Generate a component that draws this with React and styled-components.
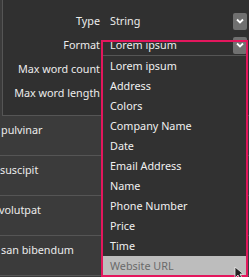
import React from "react";
import styled, { createGlobalStyle } from "styled-components";

const Global = createGlobalStyle`
  html, body { margin: 0; padding: 0; background: #2f2f2f; }
  body { font-family: "Noto Sans", "Open Sans", sans-serif; }
`;

const Frame = styled.div`
  position: relative;
  width: 249px;
  height: 277px;
  overflow: hidden;
  background: #3b3b3b;
  font-size: 10.8px;
  color: #ececec;
`;

const Props = styled.div`
  height: 116px;
  margin-left: 2px;
  border-left: 1px solid #555;
  border-bottom: 1px solid #555;
  background: #303030;
  box-sizing: border-box;
  padding-top: 9px;
  display: grid;
  grid-template-columns: 97px 1fr;
  grid-auto-rows: 24px;
  column-gap: 10px;
  align-items: center;
`;

const Label = styled.div`
  text-align: right;
  white-space: nowrap;
  line-height: 16px;
`;

const Value = styled.div`
  display: flex;
  align-items: center;
  justify-content: space-between;
  padding-right: 2px;
  line-height: 16px;
`;

const ChevronBtn = styled.div`
  width: 14px;
  height: 17px;
  border-radius: 2px;
  background: #707070;
  display: flex;
  align-items: center;
  justify-content: center;
`;

const Row = styled.div`
  height: 40px;
  box-sizing: border-box;
  border-bottom: 1px solid #555;
  padding-top: 6px;
  overflow: hidden;
  white-space: nowrap;
  line-height: 16px;
`;

const RowText = styled.span`
  display: inline-block;
  margin-left: ${(p) => p.$shift}px;
`;

const Popup = styled.div`
  position: absolute;
  left: 101px;
  top: 40px;
  width: 147px;
  height: 237px;
  box-sizing: border-box;
  border: 2px solid #e3175d;
  display: flex;
  flex-direction: column;
  overflow: hidden;
`;

const FieldGap = styled.div`
  height: 13px;
  flex: none;
`;

const List = styled.div`
  flex: 1;
  background: #313131;
  border-top: 1px solid #555;
  overflow: hidden;
`;

const Item = styled.div`
  height: 20px;
  line-height: 20px;
  padding-left: 7px;
  white-space: nowrap;
  background: ${(p) => (p.$active ? "#bdbdbd" : "transparent")};
  color: ${(p) => (p.$active ? "#6a6a6a" : "#f0f0f0")};
`;

const Cursor = styled.svg`
  position: absolute;
  left: 234px;
  top: 266px;
`;

const Chevron = () => (
  <svg width="8" height="6" viewBox="0 0 8 6">
    <path d="M1 1.5 L4 4.5 L7 1.5" fill="none" stroke="#fff" strokeWidth="1.8" />
  </svg>
);

const items = [
  "Lorem ipsum",
  "Address",
  "Colors",
  "Company Name",
  "Date",
  "Email Address",
  "Name",
  "Phone Number",
  "Price",
  "Time",
  "Website URL",
];

const rows = [
  { text: "pulvinar", shift: 1 },
  { text: "suscipit", shift: 0 },
  { text: "volutpat", shift: -1 },
  { text: "san bibendum", shift: 1 },
];

export default function App() {
  return (
    <Frame>
      <Global />
      <Props>
        <Label>Type</Label>
        <Value>
          <span>String</span>
          <ChevronBtn><Chevron /></ChevronBtn>
        </Value>
        <Label>Format</Label>
        <Value>
          <span>Lorem ipsum</span>
          <ChevronBtn><Chevron /></ChevronBtn>
        </Value>
        <Label>Max word count</Label>
        <Value />
        <Label>Max word length</Label>
        <Value />
      </Props>
      {rows.map((r) => (
        <Row key={r.text}>
          <RowText $shift={r.shift}>{r.text}</RowText>
        </Row>
      ))}
      <Popup>
        <FieldGap />
        <List>
          {items.map((it) => (
            <Item key={it} $active={it === "Website URL"}>{it}</Item>
          ))}
        </List>
      </Popup>
      <Cursor width="10" height="14" viewBox="0 0 10 14">
        <path d="M1 1 L1 12 L4 9 L6 13 L8 12 L6 8 L9.5 8 Z" fill="#222" stroke="#eee" strokeWidth="0.8" />
      </Cursor>
    </Frame>
  );
}
